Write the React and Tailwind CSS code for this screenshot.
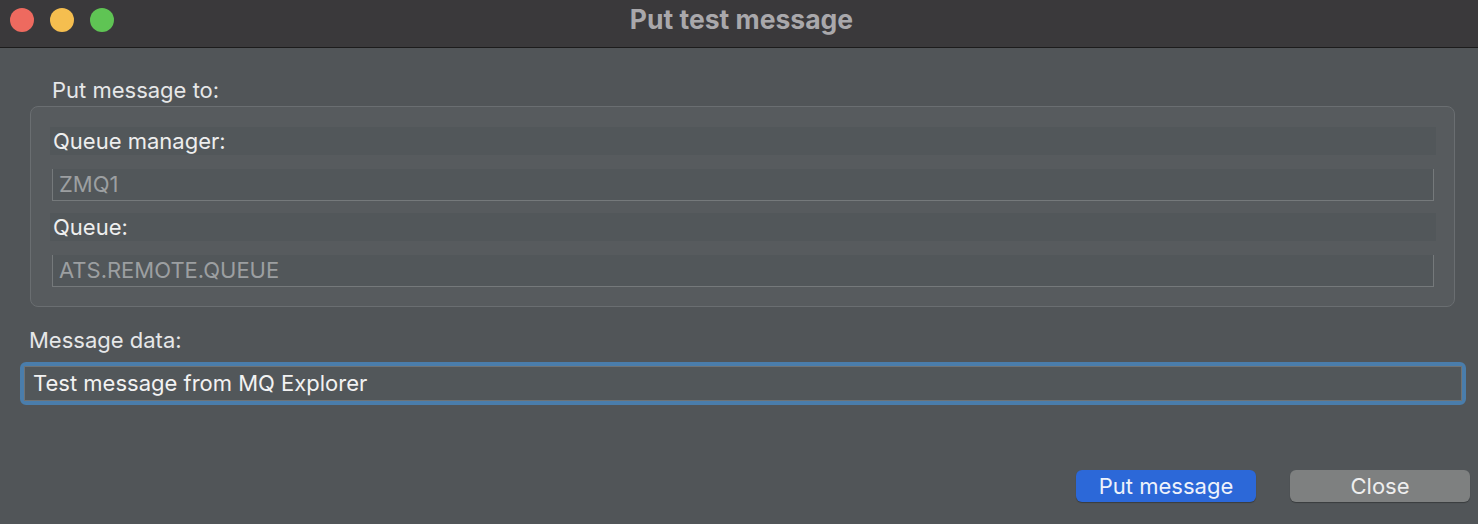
export default function App() {
  return (
    <div className="w-[1478px] h-[524px] flex flex-col bg-[#515558] overflow-hidden font-['Inter',sans-serif]">
      <div className="h-[48px] shrink-0 bg-[#3a393b] border-b border-[#1c1c1c] relative flex items-center justify-center">
        <div className="absolute left-[10px] top-[8px] flex gap-[16px]">
          <span className="w-[24px] h-[24px] rounded-full bg-[#ee6a5f]" />
          <span className="w-[24px] h-[24px] rounded-full bg-[#f5be4f]" />
          <span className="w-[24px] h-[24px] rounded-full bg-[#5fc454]" />
        </div>
        <h1 className="text-[26.5px] leading-[30px] font-bold text-[#a9a8ab] -mt-[9px] ml-[5px]">Put test message</h1>
      </div>

      <div className="flex flex-col pl-[20px] pr-[12px] pt-[30px]">
        <div className="pl-[32px] text-[22px] text-[#e6e7e8] leading-[24px]">Put message to:</div>
        <div className="mt-[4px] ml-[10px] mr-[11px] rounded-[8px] border border-[#6a6e71] bg-[#575b5e] pl-[19px] pr-[18px] pt-[20px] pb-[19px] flex flex-col">
          <div className="h-[28px] bg-[#52575a] flex items-center pl-[3px] text-[22px] text-[#eeeeee]">Queue manager:</div>
          <div className="mt-[14px] mx-[2px] h-[32px] border-l border-r border-b border-[#75797b] bg-[#52575a] flex items-center pl-[6px] text-[22px] text-[#9c9fa1]">ZMQ1</div>
          <div className="mt-[12px] h-[28px] bg-[#52575a] flex items-center pl-[3px] text-[22px] text-[#eeeeee]">Queue:</div>
          <div className="mt-[14px] mx-[2px] h-[32px] border-l border-r border-b border-[#75797b] bg-[#52575a] flex items-center pl-[6px] text-[22px] text-[#9c9fa1]">ATS.REMOTE.QUEUE</div>
        </div>
        <div className="mt-[20px] pl-[9px] text-[22px] text-[#e6e7e8] leading-[26px]">Message data:</div>
        <div className="mt-[9px] h-[43px] rounded-[6px] border-[4px] border-[#4a7dab] bg-[#52575a] flex">
          <div className="flex-1 border border-[#6f7375] flex items-center pl-[8px] text-[22px] text-[#f2f2f2]">Test message from MQ Explorer</div>
        </div>
        <div className="mt-[65px] flex justify-end gap-[34px] -mr-[4px]">
          <button className="w-[180px] h-[32px] rounded-[6px] bg-[#2c68d8] text-[22px] leading-[26px] text-[#eef2fb] shadow-[0_1px_1px_rgba(0,0,0,0.3)]">Put message</button>
          <button className="w-[180px] h-[32px] rounded-[6px] bg-[#7e8080] text-[22px] leading-[26px] text-[#eeeeee] shadow-[0_1px_1px_rgba(0,0,0,0.3)]">Close</button>
        </div>
      </div>
    </div>
  );
}
